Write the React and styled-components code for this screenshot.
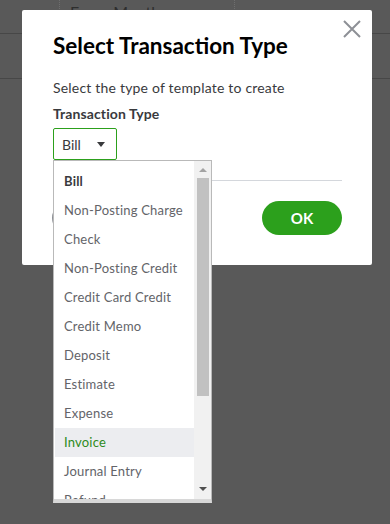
import React from "react";
import styled, { createGlobalStyle } from "styled-components";

const GlobalStyle = createGlobalStyle`
  body {
    margin: 0;
    font-family: "Lato", "Open Sans", sans-serif;
  }
`;

const OPTIONS = [
  "Bill",
  "Non-Posting Charge",
  "Check",
  "Non-Posting Credit",
  "Credit Card Credit",
  "Credit Memo",
  "Deposit",
  "Estimate",
  "Expense",
  "Invoice",
  "Journal Entry",
  "Refund",
];

const App = () => {
  const selected = "Bill";
  const hovered = "Invoice";

  return (
    <>
      <GlobalStyle />
      <Page>
        <BehindPage>
          <HeaderRow>
            <Cell width="60px" />
            <Cell width="175px">Every Month</Cell>
            <Cell />
          </HeaderRow>
          <BodyRow />
        </BehindPage>

        <Modal>
          <CloseButton aria-label="Close">
            <svg width="18" height="18" viewBox="0 0 18 18">
              <path
                d="M1 1 L17 17 M17 1 L1 17"
                stroke="#8d9096"
                strokeWidth="2"
                fill="none"
              />
            </svg>
          </CloseButton>
          <Title>Select Transaction Type</Title>
          <Subtitle>Select the type of template to create</Subtitle>
          <Label>Transaction Type</Label>
          <SelectWrap>
            <SelectBox>
              <span>{selected}</span>
              <Caret />
            </SelectBox>
            <Dropdown>
              <Options>
                {OPTIONS.map((opt) => (
                  <Option
                    key={opt}
                    $selected={opt === selected}
                    $hover={opt === hovered}
                  >
                    {opt}
                  </Option>
                ))}
              </Options>
              <ScrollTrack>
                <ScrollArrow $up />
                <ScrollThumb />
                <ScrollSpace />
                <ScrollArrow />
              </ScrollTrack>
            </Dropdown>
          </SelectWrap>
          <Divider />
          <Footer>
            <CancelButton>Cancel</CancelButton>
            <OkButton>OK</OkButton>
          </Footer>
        </Modal>
      </Page>
    </>
  );
};

const Page = styled.div`
  position: relative;
  width: 390px;
  height: 524px;
  overflow: hidden;
  background: #595959;
`;

const BehindPage = styled.div`
  display: flex;
  flex-direction: column;
`;

const HeaderRow = styled.div`
  display: flex;
  height: 33px;
  border-bottom: 1px solid #474747;
`;

const Cell = styled.div`
  width: ${(p) => p.width || "auto"};
  flex: ${(p) => (p.width ? "none" : "1")};
  border-right: ${(p) => (p.width ? "1px dotted #6e6e6e" : "none")};
  padding: 2px 0 0 10px;
  box-sizing: border-box;
  font-size: 16px;
  color: #2e2e2e;
`;

const BodyRow = styled.div`
  height: 44px;
  border-bottom: 1px solid #474747;
`;

const Modal = styled.div`
  position: absolute;
  left: 22px;
  top: 10px;
  width: 350px;
  height: 255px;
  box-sizing: border-box;
  padding: 21px 30px 0 31px;
  background: #fff;
  border-radius: 2px;
  display: flex;
  flex-direction: column;
`;

const CloseButton = styled.button`
  position: absolute;
  top: 10px;
  right: 11px;
  padding: 0;
  border: none;
  background: none;
  display: flex;
`;

const Title = styled.h1`
  margin: 0;
  font-size: 22.5px;
  line-height: 30px;
  font-weight: 700;
  color: #000;
`;

const Subtitle = styled.p`
  margin: 17px 0 0;
  font-size: 14px;
  line-height: 20px;
  letter-spacing: 0.2px;
  color: #393a3d;
`;

const Label = styled.div`
  margin-top: 6px;
  font-size: 14px;
  line-height: 20px;
  letter-spacing: 0.1px;
  font-weight: 700;
  color: #393a3d;
`;

const SelectWrap = styled.div`
  position: relative;
  margin-top: 4px;
`;

const SelectBox = styled.div`
  width: 64px;
  height: 32px;
  box-sizing: border-box;
  border: 1px solid #2ca01c;
  border-radius: 2px;
  display: flex;
  align-items: center;
  justify-content: space-between;
  padding: 0 11px 0 8px;
  font-size: 14px;
  color: #393a3d;
`;

const Caret = styled.span`
  width: 0;
  height: 0;
  border-left: 4.5px solid transparent;
  border-right: 4.5px solid transparent;
  border-top: 5px solid #393a3d;
`;

const Dropdown = styled.div`
  position: absolute;
  top: 32px;
  left: 0;
  z-index: 2;
  width: 159px;
  height: 343px;
  box-sizing: border-box;
  background: #fff;
  border: 1px solid #b9b9b9;
  border-bottom: 4px solid #d8d8d8;
  display: flex;
  overflow: hidden;
`;

const Options = styled.ul`
  flex: 1;
  margin: 0;
  padding: 6px 0 0 1px;
  list-style: none;
`;

const Option = styled.li`
  height: 29px;
  line-height: 29px;
  padding-left: 9px;
  font-size: 13px;
  letter-spacing: 0.2px;
  white-space: nowrap;
  font-weight: ${(p) => (p.$selected ? 700 : 400)};
  color: ${(p) => (p.$hover ? "#2e8b22" : p.$selected ? "#393a3d" : "#636469")};
  background: ${(p) => (p.$hover ? "#ecedf0" : "transparent")};
`;

const ScrollTrack = styled.div`
  width: 17px;
  background: #f1f1f1;
  display: flex;
  flex-direction: column;
  align-items: center;
  padding: 0 0 2px;
`;

const ScrollArrow = styled.div`
  height: 17px;
  width: 100%;
  display: flex;
  align-items: center;
  justify-content: center;
  &::before {
    content: "";
    border-left: 4px solid transparent;
    border-right: 4px solid transparent;
    ${(p) =>
      p.$up
        ? "border-bottom: 4px solid #a3a3a3;"
        : "border-top: 4px solid #505050;"}
  }
`;

const ScrollThumb = styled.div`
  width: 12px;
  height: 218px;
  background: #c1c1c1;
`;

const ScrollSpace = styled.div`
  flex: 1;
`;

const Divider = styled.div`
  margin-top: 20px;
  height: 1px;
  background: #d4d7dc;
`;

const Footer = styled.div`
  margin-top: 20px;
  display: flex;
  justify-content: space-between;
`;

const CancelButton = styled.button`
  height: 34px;
  width: 82px;
  margin-left: -1px;
  border: 2px solid #8d9096;
  border-radius: 17px;
  background: #fff;
  font-family: inherit;
  font-size: 15px;
  font-weight: 700;
  color: #393a3d;
`;

const OkButton = styled.button`
  height: 34px;
  width: 80px;
  border: none;
  border-radius: 17px;
  background: #2ca01c;
  font-family: inherit;
  font-size: 15px;
  font-weight: 700;
  color: #fff;
`;

export default App;
